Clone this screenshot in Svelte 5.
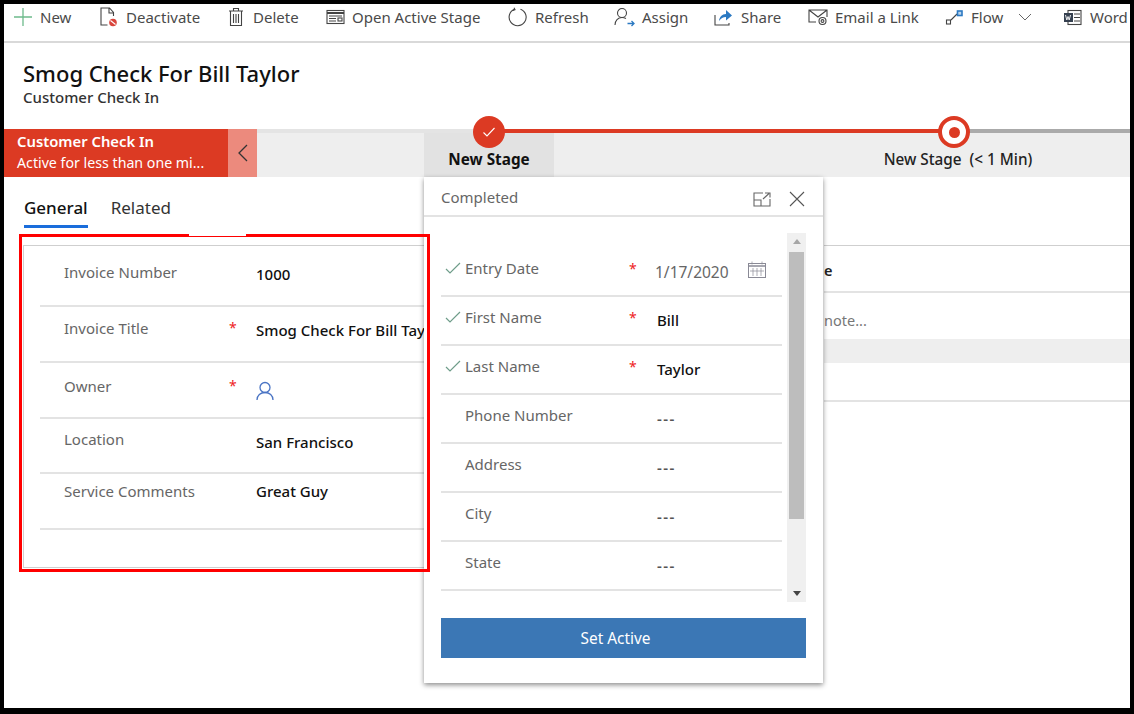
<script>
  const formRows = [
    { label: 'Invoice Number', value: '1000', h: 61, ly: 16, vy: 18 },
    { label: 'Invoice Title', value: 'Smog Check For Bill Taylor', req: true, h: 56, ly: 11, vy: 13 },
    { label: 'Owner', req: true, user: true, h: 56, ly: 13, vy: 14 },
    { label: 'Location', value: 'San Francisco', h: 55, ly: 10, vy: 13 },
    { label: 'Service Comments', value: 'Great Guy', h: 56, ly: 7, vy: 7 }
  ];
  const stageRows = [
    { label: 'Entry Date', done: true, req: true, date: '1/17/2020' },
    { label: 'First Name', done: true, req: true, value: 'Bill' },
    { label: 'Last Name', done: true, req: true, value: 'Taylor' },
    { label: 'Phone Number', value: '---' },
    { label: 'Address', value: '---' },
    { label: 'City', value: '---' },
    { label: 'State', value: '---' }
  ];
</script>

<div class="frame">
  <div class="page">
    <nav class="cmd">
      <span class="item"><svg width="20" height="20" viewBox="0 0 20 20"><path d="M10 1v18M1 10h18" stroke="#6dbb8c" stroke-width="1.300" fill="none"/></svg>New</span>
      <span class="item"><svg width="20" height="20" viewBox="0 0 20 20" fill="none"><path d="M8.500 18H2V1h8.500l4 4.500V9M10 1v5h4.500" stroke="#444" stroke-width="1.100"/><circle cx="14" cy="15.500" r="3.800" fill="#d9453c"/><path d="M11.500 13.500l5 4" stroke="#fff" stroke-width="1.100"/></svg>Deactivate</span>
      <span class="item"><svg width="16" height="20" viewBox="0 0 16 20" fill="none" stroke="#444" stroke-width="1.100"><path d="M1 4h14M5.500 4V1.500h5V4M2.500 4v14.500h11V4"/><path d="M5.500 7v9M8 7v9M10.500 7v9"/></svg>Delete</span>
      <span class="item"><svg width="19" height="18" viewBox="0 0 19 18" fill="none" stroke="#444" stroke-width="1.100"><rect x="1" y="2.500" width="17" height="13"/><path d="M1 5h17" stroke-width="2"/><path d="M3 8h13M3 10.500h7M3 13h7"/><rect x="12" y="10" width="4" height="3"/></svg>Open Active Stage</span>
      <span class="item"><svg width="20" height="20" viewBox="0 0 20 20" fill="none" stroke="#444" stroke-width="1.100"><path d="M12.500 2.200A8.500 8.500 0 1 1 6.500 2.300"/><path d="M6 .8l1 2-2.200.8"/></svg>Refresh</span>
      <span class="item"><svg width="21" height="20" viewBox="0 0 21 20" fill="none"><circle cx="8" cy="6" r="4.500" stroke="#444" stroke-width="1.100"/><path d="M1 18c0-4.500 3-7.500 7-7.500 1.500 0 2.800.4 4 1" stroke="#444" stroke-width="1.100"/><path d="M13.500 16.500h6.500M17.500 14l2.500 2.500-2.500 2.500" stroke="#2b79c2" stroke-width="1.300"/></svg>Assign</span>
      <span class="item"><svg width="19" height="19" viewBox="0 0 19 19" fill="none"><path d="M1 7v10h14v-2" stroke="#444" stroke-width="1.100"/><path d="M5 13c.5-4 3-7 7-7V2l6 5.500L12 12.500V9C9 9 7 10.500 5 13z" fill="#2b79c2"/></svg>Share</span>
      <span class="item"><svg width="20" height="18" viewBox="0 0 20 18" fill="none" stroke="#444" stroke-width="1.100"><path d="M8 14H1V2h18v7M1 2l9 7 9-7"/><circle cx="14.500" cy="13" r="3.500"/><circle cx="14.500" cy="13" r="1.400"/></svg>Email a Link</span>
      <span class="item flow"><svg width="19" height="18" viewBox="0 0 19 18" fill="none"><rect x="1.500" y="12" width="4" height="4" stroke="#444" stroke-width="1.100"/><path d="M6 12l6-6" stroke="#444" stroke-width="1.100"/><rect x="12.500" y="3" width="4.500" height="4.500" stroke="#2b79c2" stroke-width="1.600" fill="#bcd6ee"/></svg>Flow<svg class="chev" width="14" height="8" viewBox="0 0 14 8" fill="none"><path d="M1 1l6 6 6-6" stroke="#666" stroke-width="1"/></svg></span>
      <span class="item"><svg width="19" height="17" viewBox="0 0 19 17" fill="none"><rect x="5" y="1.500" width="13" height="14" stroke="#444" stroke-width="1.100"/><path d="M11 5h6M11 8.500h6M11 12h6" stroke="#444"/><rect x="1" y="4" width="9" height="9" fill="#35404f"/><path d="M2.500 6l1.300 5 1.200-3.500L6.200 11l1.300-5" stroke="#fff" stroke-width=".9"/></svg>Word</span>
    </nav>

    <header class="head">
      <h1>Smog Check For Bill Taylor</h1>
      <p>Customer Check In</p>
    </header>

    <div class="stagebar">
      <div class="active">
        <strong>Customer Check In</strong>
        <span>Active for less than one mi...</span>
      </div>
      <div class="collapse"><svg width="10" height="18" viewBox="0 0 10 18" fill="none"><path d="M9 1L1 9l8 8" stroke="#333" stroke-width="1.300"/></svg></div>
      <div class="track">
        <div class="rail"></div>
        <div class="railred"></div>
        <div class="stages">
          <div class="spacer"></div>
          <div class="stage on">New Stage</div>
          <div class="stage next">New Stage&nbsp; (&lt; 1 Min)</div>
        </div>
        <span class="dot done"><svg width="14" height="12" viewBox="0 0 14 12" fill="none"><path d="M1.500 6.500l3.500 3.500 7.500-8" stroke="#fff" stroke-width="1.100"/></svg></span>
        <span class="dot target"><i></i></span>
      </div>
    </div>

    <div class="tabs">
      <span class="tab sel">General</span>
      <span class="tab">Related</span>
    </div>

    <div class="content">
      <section class="card left">
        {#each formRows as r}
          <div class="frow" style="height:{r.h}px">
            <span class="flabel" style="margin-top:{r.ly}px">{r.label}</span>
            <span class="star" style="margin-top:{r.ly}px">{r.req ? '*' : ''}</span>
            {#if r.user}
              <svg class="user" width="18" height="20" viewBox="0 0 18 20" fill="none" stroke="#4a74c4" stroke-width="1.300"><circle cx="9" cy="6.500" r="5"/><path d="M1 19c0-4.500 3.500-7.500 8-7.500s8 3 8 7.500"/></svg>
            {:else}
              <span class="fval" style="margin-top:{r.vy}px">{r.value}</span>
            {/if}
          </div>
        {/each}
      </section>

      <section class="right">
        <div class="rrow a"><b>e</b></div>
        <div class="rrow b">note...</div>
        <div class="band"></div>
        <div class="rrow c"></div>
      </section>
    </div>

    <aside class="pop">
      <div class="pophead">
        <span>Completed</span>
        <svg class="hic" width="18" height="15" viewBox="0 0 18 15" fill="none" stroke="#666" stroke-width="1.100"><path d="M17 7v7H1V1h9"/><path d="M1 8h7v6"/><path d="M10 7l6-5.500M12 1h5v4.500" /></svg>
        <svg class="hic" width="16" height="16" viewBox="0 0 16 16" fill="none" stroke="#555" stroke-width="1.100"><path d="M1 1l14 14M15 1L1 15"/></svg>
      </div>
      <div class="popbody">
        <div class="list">
          {#each stageRows as r}
            <div class="srow">
              <span class="chk">
                {#if r.done}<svg width="16" height="12" viewBox="0 0 16 12" fill="none"><path d="M1 7l4 4L15 1" stroke="#6f9d8a" stroke-width="1.200"/></svg>{/if}
              </span>
              <span class="slabel">{r.label}</span>
              <span class="sstar">{r.req ? '*' : ''}</span>
              {#if r.date}
                <span class="sdate">{r.date}</span>
                <svg class="cal" width="18" height="17" viewBox="0 0 18 17" fill="none" stroke="#8a8a96"><rect x=".5" y="2.500" width="17" height="14"/><path d="M.5 5h17" stroke-width="1.500"/><path d="M4 .5v3M14 .5v3M5 7v8M9 7v8M13 7v8M2 10h14" stroke-width=".7"/></svg>
              {:else}
                <span class="sval" class:dash={r.value === '---'}>{r.value}</span>
              {/if}
            </div>
          {/each}
        </div>
        <div class="scroll">
          <div class="arrow up"></div>
          <div class="thumb"></div>
          <div class="arrow down"></div>
        </div>
      </div>
      <button class="cta">Set Active</button>
    </aside>

    <div class="redbox"><i></i></div>
  </div>
</div>

<style>
  :global(body) { margin: 0; background: #000; }
  .frame { width: 1134px; height: 714px; background: #000; padding: 4px 4px 6px; box-sizing: border-box; }
  .page { position: relative; width: 1126px; height: 704px; background: #fff; overflow: hidden;
    font-family: "Noto Sans", "Open Sans", sans-serif; color: #222; }

  .cmd { display: flex; align-items: center; height: 39px; box-sizing: border-box; border-bottom: 2px solid #d9d9d9; padding: 0 0 11px 9px; white-space: nowrap; font-size: 15px; color: #4a4a4a; overflow: hidden; }
  .item { display: inline-flex; align-items: center; gap: 7px; flex: none; }
  .item:nth-child(1) { width: 86px; }
  .item:nth-child(2) { width: 129px; }
  .item:nth-child(3) { width: 98px; gap: 9px; }
  .item:nth-child(4) { width: 182px; }
  .item:nth-child(5) { width: 106px; }
  .item:nth-child(6) { width: 100px; }
  .item:nth-child(7) { width: 94px; gap: 8px; }
  .item:nth-child(8) { width: 137px; }
  .item:nth-child(9) { width: 118px; }
  .item:nth-child(10) { gap: 8px; }
  .flow .chev { margin-left: 8px; }

  .head { height: 86px; box-sizing: border-box; padding: 16px 0 0 19px; }
  h1 { margin: 0; font-size: 22px; font-weight: 500; line-height: 28px; color: #111; }
  .head p { margin: 1px 0 0; font-size: 15px; font-weight: 500; line-height: 18px; color: #333; }

  .stagebar { display: flex; height: 48px; }
  .active { width: 224px; background: #dc3a23; color: #fff; box-sizing: border-box; padding: 1px 0 0 13px; display: flex; flex-direction: column; font-size: 14.200px; line-height: 22px; white-space: nowrap; }
  .active strong { font-weight: 600; font-size: 14.800px; }
  .collapse { width: 29px; background: #ec8a7d; display: flex; align-items: center; justify-content: center; }
  .track { position: relative; flex: 1; }
  .rail { position: absolute; left: 0; right: 0; top: 0; height: 4px; background: #e4e4e4; }
  .railred { position: absolute; left: 231px; width: 466px; top: 0; height: 4px; background: #dc3a23; }
  .rail::after { content: ""; position: absolute; left: 697px; right: 0; top: 0; bottom: 0; background: #aaa; }
  .stages { display: flex; position: absolute; inset: 4px 0 0 0; background: #eee; }
  .spacer { width: 167px; }
  .stage { display: flex; align-items: flex-end; justify-content: center; padding-bottom: 8px; font-size: 15.300px; font-weight: 500; box-sizing: border-box; color: #222; }
  .stage.on { width: 130px; background: #e2e2e2; font-weight: 700; color: #111; }
  .stage.next { flex: 1; padding-left: 232px; }
  .dot { position: absolute; top: -13px; width: 32px; height: 32px; border-radius: 50%; box-sizing: border-box; display: flex; align-items: center; justify-content: center; }
  .dot.done { left: 216px; background: #dc3a23; }
  .dot.target { left: 681px; background: #fff; border: 4px solid #dc3a23; }
  .dot.target i { width: 11px; height: 11px; border-radius: 50%; background: #dc3a23; }

  .tabs { display: flex; gap: 23px; padding-left: 20px; height: 68px; box-sizing: border-box; font-size: 17px; color: #333; }
  .tab { height: 51px; box-sizing: border-box; padding-top: 18px; line-height: 26px; }
  .tab.sel { font-weight: 500; color: #111; border-bottom: 3px solid #1a6ddb; }

  .content { display: flex; }
  .card.left { width: 401px; height: 323px; margin-left: 19px; border: 1px solid #cfcfcf; border-right: 0; box-sizing: border-box; padding-left: 16px; overflow: hidden; flex: none; }
  .frow { display: flex; align-items: flex-start; border-bottom: 2px solid #e3e3e3; box-sizing: border-box; font-size: 15px; }
  .flabel { width: 165px; padding-left: 24px; line-height: 20px; color: #666; flex: none; }
  .star { width: 27px; color: #e22; line-height: 20px; flex: none; font-size: 14px; }
  .fval { font-weight: 500; color: #111; line-height: 20px; white-space: nowrap; }
  .user { margin-top: 18px; }

  .right { position: absolute; left: 820px; right: 0; top: 241px; font-size: 14.500px; border-top: 1px solid #cfcfcf; }
  .rrow { border-bottom: 2px solid #e3e3e3; box-sizing: border-box; }
  .rrow.a { height: 47px; padding-top: 14px; line-height: 20px; color: #222; }
  .rrow.a b { font-weight: 600; }
  .rrow.b { height: 46px; padding-top: 17px; line-height: 20px; color: #777; border-bottom: 0; }
  .band { height: 24px; background: #eee; }
  .rrow.c { height: 39px; }

  .pop { position: absolute; left: 420px; top: 173px; width: 399px; height: 506px; background: #fff; box-shadow: 0 2px 5px rgba(0,0,0,.45); }
  .pophead { display: flex; align-items: center; height: 40px; box-sizing: border-box; border-bottom: 2px solid #e3e3e3; padding: 2px 18px 0 17px; font-size: 15px; color: #666; gap: 18px; }
  .pophead span { flex: 1; }
  .hic { margin-top: 4px; }
  .popbody { display: flex; padding: 16px 17px 0; gap: 5px; align-items: flex-start; }
  .list { width: 341px; padding-top: 15px; }
  .srow { position: relative; display: flex; height: 49px; border-bottom: 2px solid #e3e3e3; box-sizing: border-box; font-size: 15px; padding-top: 10px; line-height: 20px; }
  .chk { width: 24px; padding-left: 4px; box-sizing: border-box; flex: none; }
  .slabel { width: 164px; color: #666; flex: none; }
  .sstar { width: 26px; color: #e22; flex: none; margin-top: 1px; font-size: 14px; }
  .sdate { color: #666; padding-top: 4px; width: 93px; font-size: 15.500px; }
  .cal { margin-top: 3px; }
  .sval { font-weight: 500; color: #111; padding-top: 3px; margin-left: 2px; }
  .sval.dash { color: #555; font-weight: 600; letter-spacing: 1.500px; }
  .scroll { width: 19px; height: 369px; background: #f0f0f0; display: flex; flex-direction: column; align-items: center; justify-content: space-between; padding: 6px 0; box-sizing: border-box; position: relative; }
  .thumb { position: absolute; left: 2px; right: 2px; top: 19px; height: 267px; background: #bdbdbd; }
  .arrow { width: 0; height: 0; border-left: 4px solid transparent; border-right: 4px solid transparent; }
  .arrow.up { border-bottom: 5px solid #a6a6a6; }
  .arrow.down { border-top: 5px solid #444; }
  .cta { display: block; width: 365px; height: 40px; margin: 16px 0 0 17px; padding: 0 16px 0 0; border: 0; background: #3b77b5; color: #fff; font: inherit; font-size: 15.400px; }

  .redbox { position: absolute; left: 15px; top: 230px; width: 411px; height: 338px; border: 3px solid #f00; box-sizing: border-box; pointer-events: none; }
  .redbox i { position: absolute; left: 167px; top: -3px; width: 57px; height: 2px; background: #fff; }
</style>
